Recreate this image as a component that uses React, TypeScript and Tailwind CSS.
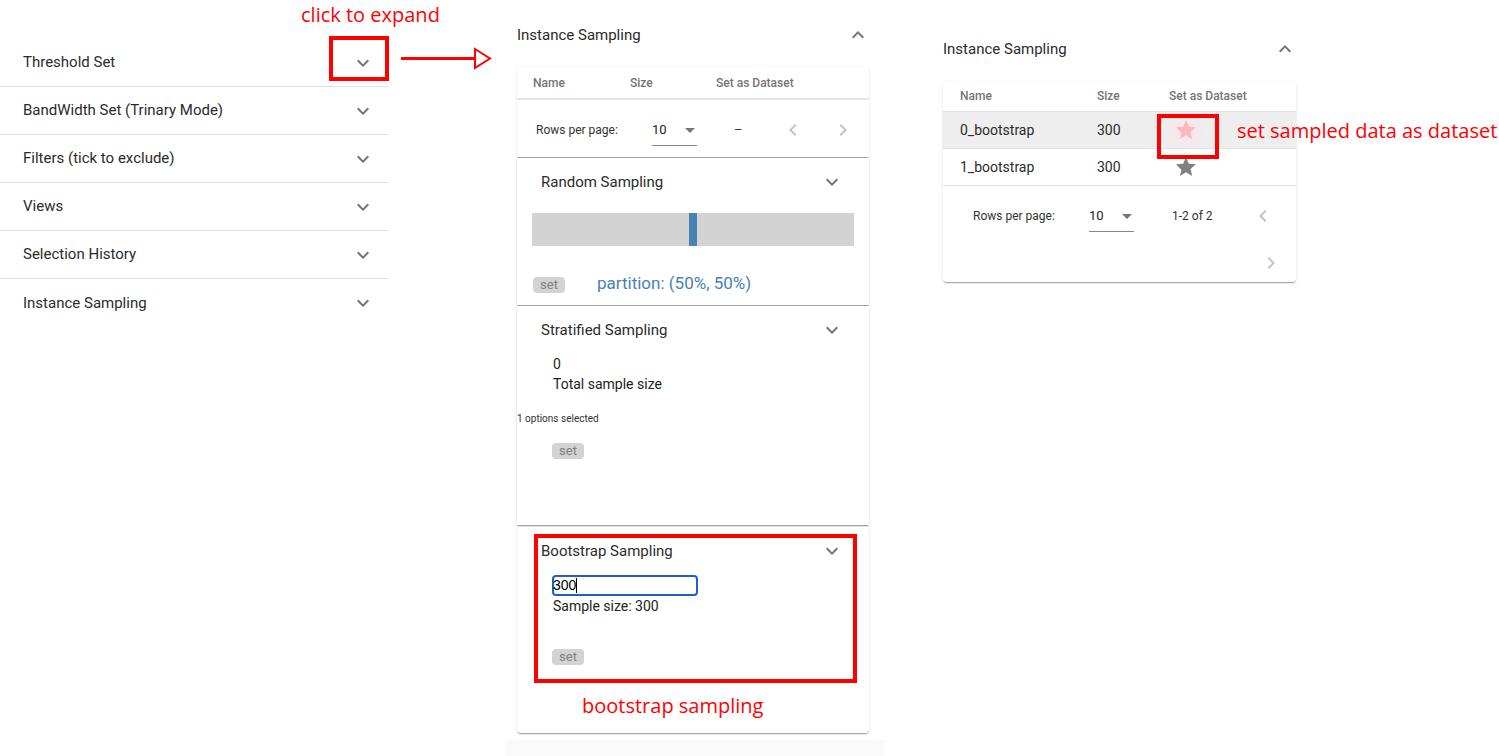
import React from "react";

const ExpandMore = ({ className = "" }: { className?: string }) => (
  <svg viewBox="0 0 24 24" className={className} width="24" height="24" fill="currentColor">
    <path d="M16.59 8.59 12 13.17 7.41 8.59 6 10l6 6 6-6z" />
  </svg>
);
const ExpandLess = ({ className = "" }: { className?: string }) => (
  <svg viewBox="0 0 24 24" className={className} width="24" height="24" fill="currentColor">
    <path d="M12 8l-6 6 1.41 1.41L12 10.83l4.59 4.58L18 14z" />
  </svg>
);
const ChevLeft = ({ className = "" }: { className?: string }) => (
  <svg viewBox="0 0 24 24" className={className} width="24" height="24" fill="currentColor">
    <path d="M15.41 7.41 14 6l-6 6 6 6 1.41-1.41L10.83 12z" />
  </svg>
);
const ChevRight = ({ className = "" }: { className?: string }) => (
  <svg viewBox="0 0 24 24" className={className} width="24" height="24" fill="currentColor">
    <path d="M10 6 8.59 7.41 13.17 12l-4.58 4.59L10 18l6-6z" />
  </svg>
);
const DropDown = ({ className = "" }: { className?: string }) => (
  <svg viewBox="0 0 24 24" className={className} width="24" height="24" fill="currentColor">
    <path d="M7 10l5 5 5-5z" />
  </svg>
);
const Star = ({ className = "" }: { className?: string }) => (
  <svg viewBox="0 0 24 24" className={className} width="24" height="24" fill="currentColor">
    <path d="M12 17.27 18.18 21l-1.64-7.03L22 9.24l-7.19-.61L12 2 9.19 8.63 2 9.24l5.46 5.73L5.82 21z" />
  </svg>
);

const paper =
  "bg-white shadow-[0_2px_1px_-1px_rgba(0,0,0,0.2),0_1px_1px_0_rgba(0,0,0,0.14),0_1px_3px_0_rgba(0,0,0,0.12)]";

const SetBtn = () => (
  <div className="w-[32px] h-[16px] rounded-[4px] bg-[#d3d3d3] text-[#808080] text-[13px] leading-[16px] flex items-center justify-center">
    set
  </div>
);

const Select10 = () => (
  <div className="w-[45px] h-[32px] border-b border-[#8a8a8a] flex items-center justify-between text-[13px] text-[#222]">
    <span>10</span>
    <DropDown className="text-[#757575] -mr-[5px]" />
  </div>
);

export default function App() {
  const leftRows = [
    "Threshold Set",
    "BandWidth Set (Trinary Mode)",
    "Filters (tick to exclude)",
    "Views",
    "Selection History",
    "Instance Sampling",
  ];
  return (
    <div
      className="relative w-[1499px] h-[756px] bg-white flex overflow-hidden"
      style={{ fontFamily: "Roboto, 'Liberation Sans', sans-serif" }}
    >
      {/* Left column */}
      <div className="w-[388px] pt-[39px] shrink-0">
        {leftRows.map((t, i) => (
          <div
            key={t}
            className={`h-[48px] flex items-center justify-between pl-[23px] pr-[13px] text-[15px] text-[#2b2b2b] ${
              i < leftRows.length - 1 ? "border-b border-[#e0e0e0]" : ""
            }`}
          >
            <span>{t}</span>
            <ExpandMore className="text-[#757575]" />
          </div>
        ))}
      </div>

      {/* Middle column */}
      <div className="ml-[117px] w-[380px] shrink-0 flex flex-col">
        <div className="pl-[12px] pr-[16px]">
          <div className="mt-[11px] h-[48px] flex items-center justify-between text-[15px] text-[#2b2b2b]">
            <span>Instance Sampling</span>
            <ExpandLess className="text-[#757575] -mr-[1px]" />
          </div>

          {/* table card */}
          <div className={`${paper} mt-[8px] h-[90px] rounded-t-[4px]`}>
            <div className="h-[33px] border-b-2 border-[#e6e6e6] flex items-center text-[12px] font-medium text-[#757575]">
              <div className="w-[113px] pl-[16px]">Name</div>
              <div className="w-[86px]">Size</div>
              <div>Set as Dataset</div>
            </div>
            <div className="pt-[14px] pl-[19px] flex items-center text-[12px] text-[#333]">
              <div className="w-[116px]">Rows per page:</div>
              <Select10 />
              <div className="ml-[37px] w-[14px] text-[13px]">–</div>
              <ChevLeft className="ml-[33px] text-[#c4c4c4]" />
              <ChevRight className="ml-[26px] text-[#c4c4c4]" />
            </div>
          </div>

          {/* Random Sampling */}
          <div className={`${paper} mt-[1px] h-[147px]`}>
            <div className="h-[48px] flex items-center justify-between pl-[24px] pr-[25px] text-[15px] text-[#2b2b2b]">
              <span>Random Sampling</span>
              <ExpandMore className="text-[#757575]" />
            </div>
            <div className="mt-[7px] mx-[15px] h-[33px] bg-[#d3d3d3] flex justify-center">
              <div className="w-[8px] h-full bg-[#4682b4]" />
            </div>
            <div className="mt-[30px] pl-[16px] flex items-center">
              <SetBtn />
              <span className="ml-[32px] -mt-[3px] text-[17px] text-[#4682b4] leading-[20px]">partition: (50%, 50%)</span>
            </div>
          </div>

          {/* Stratified Sampling */}
          <div className={`${paper} mt-[1px] h-[219px]`}>
            <div className="h-[48px] flex items-center justify-between pl-[24px] pr-[25px] text-[15px] text-[#2b2b2b]">
              <span>Stratified Sampling</span>
              <ExpandMore className="text-[#757575]" />
            </div>
            <div className="pl-[36px] text-[14px] leading-[20px] text-[#222]">
              <div>0</div>
              <div>Total sample size</div>
            </div>
            <div className="mt-[18px] text-[10px] leading-[14px] text-[#333]">1 options selected</div>
            <div className="mt-[17px] pl-[35px]">
              <SetBtn />
            </div>
          </div>

          {/* Bootstrap Sampling */}
          <div className={`${paper} mt-[2px] h-[206px] rounded-b-[4px]`}>
            <div className="h-[48px] flex items-center justify-between pl-[24px] pr-[25px] text-[15px] text-[#2b2b2b]">
              <span>Bootstrap Sampling</span>
              <ExpandMore className="text-[#757575]" />
            </div>
            <div className="ml-[35px] w-[146px] h-[21px] border-2 border-[#1a62c8] rounded-[4px] flex items-center text-[14px] text-black" style={{ fontFamily: "'Liberation Sans', Arial, sans-serif" }}>
              <span className="-ml-[1px]">300</span>
              <span className="w-[1px] h-[15px] bg-black" />
            </div>
            <div className="pl-[36px] text-[14px] leading-[20px] text-[#222]">Sample size: 300</div>
            <div className="mt-[33px] pl-[35px]">
              <SetBtn />
            </div>
          </div>
        </div>
        <div className="mt-[7px] h-[16px] bg-[#fafafa]" />
      </div>

      {/* Right column */}
      <div className="ml-[58px] w-[353px] shrink-0">
        <div className="mt-[25px] h-[48px] flex items-center justify-between text-[15px] text-[#2b2b2b]">
          <span>Instance Sampling</span>
          <ExpandLess className="text-[#757575] -mr-[1px]" />
        </div>
        <div className={`${paper} mt-[8px] h-[201px] rounded-[4px]`}>
          <div className="h-[31px] border-b border-[#e0e0e0] flex items-center text-[12px] font-medium text-[#757575]">
            <div className="w-[154px] pl-[17px]">Name</div>
            <div className="w-[72px]">Size</div>
            <div>Set as Dataset</div>
          </div>
          <div className="h-[37px] bg-[#eeeeee] border-b border-[#e0e0e0] flex items-center text-[14px] text-[#2b2b2b]">
            <div className="w-[154px] pl-[17px]">0_bootstrap</div>
            <div className="w-[72px]">300</div>
            <div className="relative w-[34px] h-[34px] ml-[0px] rounded-full bg-[#f6e9eb] flex items-center justify-center">
              <Star className="text-[#ffb6c1]" />
            </div>
          </div>
          <div className="h-[37px] border-b border-[#e0e0e0] flex items-center text-[14px] text-[#2b2b2b]">
            <div className="w-[154px] pl-[17px]">1_bootstrap</div>
            <div className="w-[72px]">300</div>
            <div className="w-[34px] flex justify-center">
              <Star className="text-[#808080]" />
            </div>
          </div>
          <div className="pt-[14px]">
            <div className="h-[32px] pl-[30px] flex items-center text-[12px] text-[#333]">
              <div className="w-[116px]">Rows per page:</div>
              <Select10 />
              <div className="ml-[38px] w-[79px]">1-2 of 2</div>
              <ChevLeft className="text-[#c4c4c4]" />
            </div>
            <div className="mt-[19px] h-[24px] flex justify-end pr-[13px]">
              <ChevRight className="text-[#c4c4c4]" />
            </div>
          </div>
        </div>
      </div>

      {/* Annotations */}
      <div
        className="absolute inset-0 pointer-events-none text-[#ff0000]"
        style={{ fontFamily: "'Open Sans', 'Noto Sans', sans-serif" }}
      >
        <div className="absolute left-[301px] top-[1px] text-[20px] leading-[27px]">click to expand</div>
        <div className="absolute left-[329px] top-[36px] w-[60px] h-[45px] border-[4px] border-[#ff0000]" />
        <svg className="absolute left-[398px] top-[46px]" width="96" height="26" viewBox="0 0 96 26">
          <line x1="3" y1="12.5" x2="77" y2="12.5" stroke="#ff0000" strokeWidth="3" />
          <polygon points="77,3 92,12.5 77,22" fill="white" stroke="#ff0000" strokeWidth="2" />
        </svg>
        <div className="absolute left-[534px] top-[534px] w-[323px] h-[149px] border-[4px] border-[#ff0000]" />
        <div className="absolute left-[582px] top-[692px] text-[20px] leading-[27px]">bootstrap sampling</div>
        <div className="absolute left-[1157px] top-[114px] w-[62px] h-[45px] border-[4px] border-[#ff0000]" />
        <div className="absolute left-[1237px] top-[117px] text-[20px] leading-[27px]">set sampled data as dataset</div>
      </div>
    </div>
  );
}
